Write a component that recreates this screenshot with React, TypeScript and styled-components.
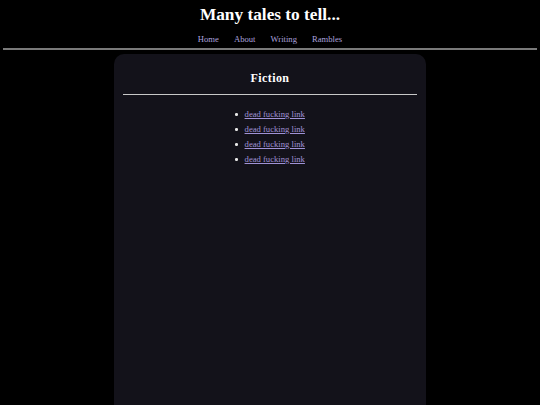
import React from 'react';
import styled, { createGlobalStyle } from 'styled-components';

const GlobalStyle = createGlobalStyle`
  html, body {
    margin: 0;
    padding: 0;
    background: #000;
    overflow: hidden;
  }

  body {
    font-family: "Liberation Serif", "Times New Roman", serif;
    color: #fff;
  }
`;

const Page = styled.div`
  height: 100vh;
  display: flex;
  flex-direction: column;
`;

const Header = styled.header`
  text-align: center;
  padding-top: 5px;
`;

const Title = styled.h1`
  margin: 0;
  font-size: 17.3px;
  line-height: 20px;
  font-weight: bold;
  color: #fff;
`;

const Nav = styled.nav`
  display: flex;
  justify-content: center;
  gap: 15px;
  margin-top: 9px;
  line-height: 10px;
`;

const NavLink = styled.a`
  font-size: 8.64px;
  color: #aaa0de;
  text-decoration: none;
`;

const Rule = styled.hr`
  margin: 4px 3px 0;
  border: none;
  border-top: 2px solid #7a7a7a;
  height: 0;
`;

const Card = styled.main`
  flex: 1;
  width: 312px;
  margin: 4px auto 0;
  padding: 17px 9px 0;
  box-sizing: border-box;
  background: #13121a;
  border-radius: 10px 10px 0 0;
`;

const CardTitle = styled.h2`
  margin: 0;
  text-align: center;
  font-size: 12px;
  line-height: 14px;
  letter-spacing: 0.4px;
  font-weight: bold;
`;

const CardRule = styled.hr`
  margin: 9px 0 0;
  border: none;
  border-top: 1px solid #c8c8c8;
  height: 0;
`;

const List = styled.ul`
  margin: 12px 0 0;
  padding: 0;
  list-style: none;
  display: flex;
  flex-direction: column;
  align-items: center;
`;

const Item = styled.li`
  display: flex;
  align-items: center;
  line-height: 15px;
  font-size: 8.64px;

  &::before {
    content: '';
    width: 2.5px;
    height: 2.5px;
    border-radius: 50%;
    background: #e8e8e8;
    margin-right: 7px;
  }
`;

const DeadLink = styled.a`
  color: #a092d6;
  text-decoration: underline;
`;

const navItems = ['Home', 'About', 'Writing', 'Rambles'];
const stories = ['dead fucking link', 'dead fucking link', 'dead fucking link', 'dead fucking link'];

export default function App() {
  return (
    <Page>
      <GlobalStyle />
      <Header>
        <Title>Many tales to tell...</Title>
        <Nav>
          {navItems.map((item) => (
            <NavLink key={item} href="#">{item}</NavLink>
          ))}
        </Nav>
      </Header>
      <Rule />
      <Card>
        <CardTitle>Fiction</CardTitle>
        <CardRule />
        <List>
          {stories.map((story, i) => (
            <Item key={i}>
              <DeadLink href="#">{story}</DeadLink>
            </Item>
          ))}
        </List>
      </Card>
    </Page>
  );
}
